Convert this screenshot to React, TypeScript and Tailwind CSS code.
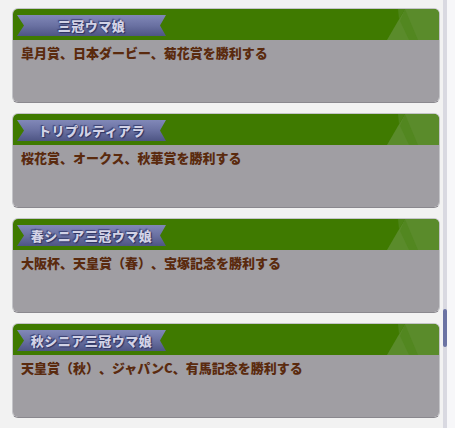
import React from "react";

const items = [
  { title: "三冠ウマ娘", desc: "皐月賞、日本ダービー、菊花賞を勝利する" },
  { title: "トリプルティアラ", desc: "桜花賞、オークス、秋華賞を勝利する" },
  { title: "春シニア三冠ウマ娘", desc: "大阪杯、天皇賞（春）、宝塚記念を勝利する" },
  { title: "秋シニア三冠ウマ娘", desc: "天皇賞（秋）、ジャパンC、有馬記念を勝利する" },
];

function Card({ title, desc }: { title: string; desc: string }) {
  return (
    <div className="h-[95px] rounded-[6px] border border-[#c4c4c8] border-b-[#8a888e] overflow-hidden flex flex-col">
      <div className="relative h-[31px] bg-[#3f7a00] pl-[4px] pt-[6px]">
        <svg className="absolute right-0 top-0" width="52" height="31" viewBox="0 0 52 31">
          <polygon points="0,31 18,0 52,0 52,31" fill="#5a8b2b" />
          <polygon points="11,0 18,0 12,10" fill="#4d8418" />
          <polygon points="18,0 31,31 22,31 13,12" fill="#528720" />
        </svg>
        <div className="relative w-[149px] h-[21px] bg-gradient-to-b from-[#8188b8] via-[#6a71a2] to-[#4e5584] [clip-path:polygon(0_0,100%_0,calc(100%-6px)_50%,100%_100%,0_100%,7px_50%)] flex items-center justify-center">
          <span className="text-[13px] leading-none font-black tracking-[0.5px] text-[#d2d2e6] [text-spacing-trim:space-all] [text-shadow:0_0_1px_#2e3360,1px_1px_1px_#2e3360,-1px_-1px_1px_#3e4474] [font-family:'Noto_Sans_CJK_JP',sans-serif]">
            {title}
          </span>
        </div>
      </div>
      <div className="flex-1 bg-[#a09ea3] px-[8px] pt-[4px]">
        <p className="text-[13px] leading-[18px] font-black text-[#5a2a0e] [text-spacing-trim:space-all] [font-family:'Noto_Sans_CJK_JP',sans-serif]">
          {desc}
        </p>
      </div>
    </div>
  );
}

export default function App() {
  return (
    <div className="w-[455px] h-[428px] bg-[#f2f2f2] flex overflow-hidden">
      <div className="flex-1 flex flex-col gap-[10px] pt-[8px] pl-[12px] pr-[3px]">
        {items.map((it) => (
          <Card key={it.title} {...it} />
        ))}
      </div>
      <div className="w-[4px] bg-[#d9d9e1] flex flex-col">
        <div className="mt-[309px] h-[38px] bg-[#6b73a3] rounded-[2px]" />
      </div>
      <div className="w-[8px] bg-[#f7f7f9]" />
    </div>
  );
}
